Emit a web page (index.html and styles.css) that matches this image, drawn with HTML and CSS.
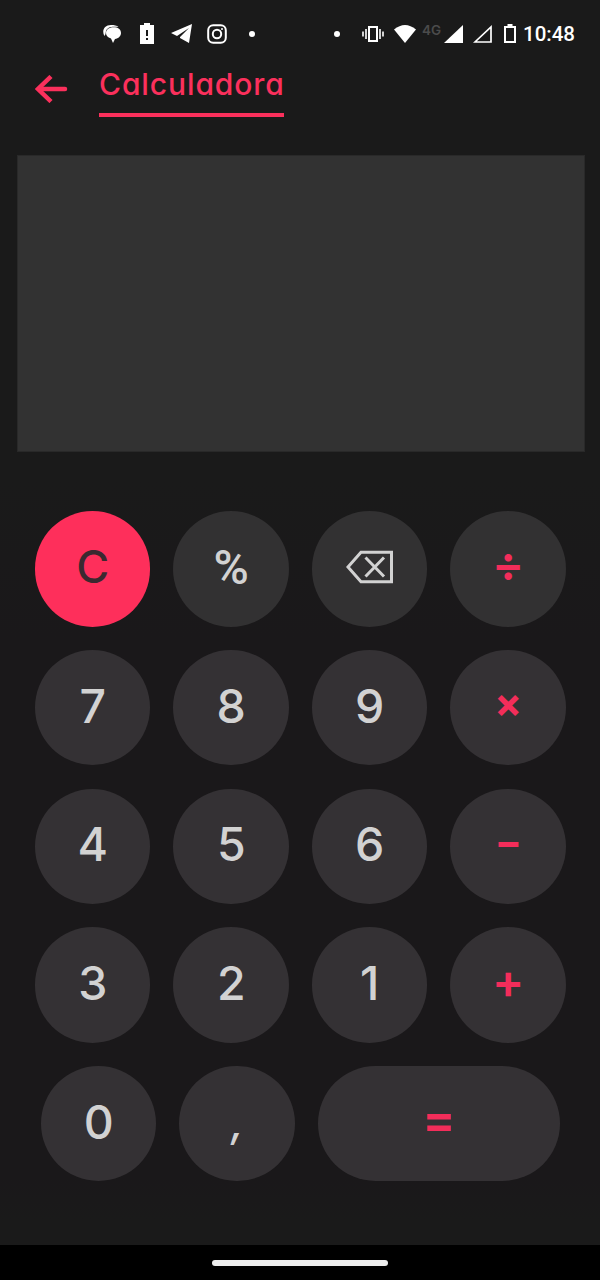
FILE: index.html
```
<!DOCTYPE html>
<html lang="pt-BR">
<head>
<meta charset="utf-8">
<title>Calculadora</title>
<link rel="stylesheet" href="styles.css">
</head>
<body>
<div class="screen">
  <div class="status">
    <div class="status-left">
      <svg width="20" height="20" viewBox="0 0 20 20"><path fill="#fff" d="M2.500 12C-.5 7 2 1 9 1c3 0 6 .5 7.500 2C10 2 5 3 4 7c-.5 2-.2 3.500-1.500 5z"/><path fill="#fff" d="M11.500 3.200c4.500 0 7.500 2 7.500 5.800 0 3-2.500 5.500-6 6L11 19l-2-4.500C5.500 13.500 4 11.500 4 9c0-3.500 3-5.800 7.500-5.800z"/></svg>
      <svg width="14" height="22" viewBox="0 0 14 22"><path fill="#fff" d="M4 0h6v2h4v19H0V2h4z"/><path stroke="#1a1a1a" stroke-width="2" d="M7 7v6M7 15v2"/></svg>
      <svg width="22" height="19" viewBox="0 0 22 19"><path fill="#fff" d="M21 0 0 9l6 3L18 4 9 13v1l9 5z"/></svg>
      <svg width="20" height="20" viewBox="0 0 20 20" fill="none" stroke="#fff" stroke-width="2"><rect x="1.200" y="1.200" width="17.600" height="17.600" rx="5"/><circle cx="10" cy="10" r="4.200"/><circle cx="15" cy="5" r="1" fill="#fff" stroke="none"/></svg>
      <span class="dot"></span>
    </div>
    <div class="status-right">
      <span class="dot"></span>
      <svg class="vibrate" width="22" height="16" viewBox="0 0 22 16" fill="none" stroke="#fff"><path stroke-width="2" d="M7 1h8v14H7z"/><path stroke-width="1.600" d="M4 3v10M1 5.500v5M18 3v10M21 5.500v5"/></svg>
      <svg class="wifi" width="22" height="18" viewBox="0 0 22 18"><path fill="#fff" d="M0 4.500Q11-4.500 22 4.500L11 18z"/></svg>
      <span class="net">4G</span>
      <svg class="signal" width="19" height="18" viewBox="0 0 19 18"><path fill="#fff" d="M19 0v18H0z"/></svg>
      <svg class="signal-empty" width="19" height="18" viewBox="0 0 19 18"><path fill="none" stroke="#fff" stroke-width="1.700" d="M18 2v15H2z"/></svg>
      <svg class="battery" width="12" height="19" viewBox="0 0 12 19"><path fill="#fff" d="M3.500 0h5v2H12v17H0V2h3.500zM2 4v13h8V4z" fill-rule="evenodd"/></svg>
      <span class="clock">10:48</span>
    </div>
  </div>
  <header class="header">
    <svg class="back" width="33" height="28" viewBox="0 0 33 28" fill="none" stroke="#fb305c" stroke-width="4.500"><path stroke-linecap="round" d="M4 14h26"/><path d="M16 1.500 3 14 16 26.500"/></svg>
    <h1 class="title">Calculadora</h1>
  </header>
  <div class="display"></div>
  <main class="keys">
    <div class="row"><button class="key clear">C</button><button class="key percent">%</button><button class="key"><svg class="erase" width="48" height="34" viewBox="0 0 48 34" fill="none" stroke="#d2d2d2" stroke-width="3"><path d="M15 2.200h30.500v29.500H15L2 17z"/><path d="m19.500 7.500 18.500 19M38 7.500l-18.500 19"/></svg></button><button class="key op">÷</button></div>
    <div class="row"><button class="key">7</button><button class="key">8</button><button class="key">9</button><button class="key op times">×</button></div>
    <div class="row"><button class="key">4</button><button class="key">5</button><button class="key">6</button><button class="key op minus">−</button></div>
    <div class="row"><button class="key">3</button><button class="key">2</button><button class="key">1</button><button class="key op">+</button></div>
    <div class="row"><button class="key">0</button><button class="key comma">,</button><button class="key op wide">=</button></div>
  </main>
  <div class="nav"><span class="pill"></span></div>
</div>
</body>
</html>
```
FILE: styles.css
```
* { box-sizing: border-box; }
body { margin: 0; background: #1a1a1a; font-family: Inter, "Open Sans", sans-serif; }
svg { display: block; flex: none; }
.screen { display: flex; flex-direction: column; height: 1280px; width: 600px; background: linear-gradient(#1a1a1a 0 480px, #1a181a 640px 1180px, #1a1a1a 1220px); }
.status { display: flex; justify-content: space-between; height: 67px; padding: 0 25px 0 102px; }
.status-left, .status-right { display: flex; align-items: center; }
.status-left { gap: 17px; }
.status-left svg:nth-child(2) { margin-left: 1px; }
.status-left svg:nth-child(3) { margin-right: -3px; }
.status-left .dot { margin-left: 5px; }
.dot { width: 6px; height: 6px; border-radius: 50%; background: #fff; }
.vibrate { margin-left: 21px; }
.wifi { margin-left: 10px; }
.net { width: 21px; margin: -7px 1px 0 6px; font-size: 13.500px; font-weight: 600; color: #4b4b4b; }
.signal-empty { margin-left: 10px; }
.battery { margin-left: 12px; }
.clock { width: 52px; margin-left: 7px; font: 500 20.5px Roboto, sans-serif; color: #fff; white-space: nowrap; }
.status-right .dot { margin-right: 1px; }
.header { display: flex; align-items: flex-start; height: 88px; padding-left: 34.500px; }
.back { margin-top: 8px; }
.title { margin: 0 0 0 31.500px; width: 185px; height: 49.500px; border-bottom: 4px solid #fb305c; color: #fb305c; font-size: 30px; font-weight: 500; line-height: 35px; letter-spacing: 0.9px; font-feature-settings: "cv11"; white-space: nowrap; }
.display { flex: none; height: 297px; margin: 0 15px 0 17px; background: #323232; border: 1px solid #292929; }
.keys { display: flex; flex-direction: column; gap: 23.200px; padding: 59.200px 0 0 0.500px; height: 793px; }
.row { display: flex; justify-content: center; gap: 23px; height: 115.500px; }
.key { display: flex; align-items: center; justify-content: center; width: 115.500px; height: 115.500px; margin: 0; padding: 0 0 4px; border: 0; border-radius: 58px; background: #343134; color: #d2d2d2; font: 500 46.500px Inter, sans-serif; letter-spacing: -0.5px; }
.row:first-child .key { background: #323132; }
.row:first-child .clear { background: #fe2f5b; color: #3b2930; font-size: 45px; }
.row .percent { padding-bottom: 3px; font-family: Roboto, sans-serif; font-size: 48px; }
.comma { font-style: italic; font-size: 42px; }
.op { color: #f32d5a; font-size: 48px; font-weight: 600; padding-bottom: 10px; }
.times { font-size: 41px; font-weight: 700; padding-bottom: 10px; }
.minus { font-size: 40px; font-weight: 700; padding-bottom: 9px; }
.wide { width: 242px; font-size: 50px; }
.nav { display: flex; justify-content: center; align-items: center; height: 35px; background: #000; }
.pill { width: 176px; height: 6px; border-radius: 3px; background: #eee; }
```
